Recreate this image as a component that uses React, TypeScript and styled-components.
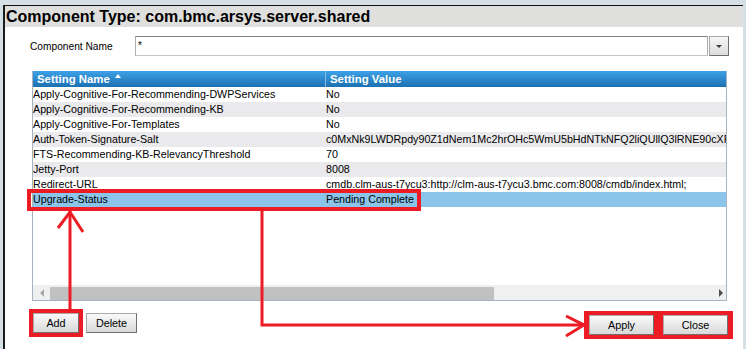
import React from 'react';
import styled, { createGlobalStyle } from 'styled-components';

const Global = createGlobalStyle`
  html, body { margin: 0; padding: 0; }
  body {
    background: #d5dfe6;
    font-family: "Liberation Sans", Arial, sans-serif;
    overflow: hidden;
  }
`;

const RED = '#ed1c24';

const Page = styled.div`
  position: relative;
  width: 746px;
  height: 349px;
  padding: 5px 3px 0 3px;
  box-sizing: border-box;
  overflow: hidden;
`;

const Frame = styled.div`
  height: 100%;
  border-top: 1px solid #111;
  border-left: 2px solid #1c1c1c;
  background: #fff;
  display: flex;
  flex-direction: column;
`;

const TitleBar = styled.div`
  height: 21px;
  line-height: 21px;
  background: #dfdfdd;
  padding-left: 1px;
  font-size: 16px;
  font-weight: bold;
  color: #000;
  white-space: nowrap;
`;

const Body = styled.div`
  flex: 1;
  display: flex;
  flex-direction: column;
  padding-top: 9px;
`;

const FormRow = styled.div`
  display: flex;
  align-items: center;
  height: 20px;
  padding-left: 25px;
`;

const Label = styled.div`
  width: 105px;
  font-size: 10.2px;
  color: #000;
`;

const Input = styled.div`
  width: 573px;
  height: 20px;
  box-sizing: border-box;
  border: 1px solid #a9aeb2;
  border-top-color: #7d8186;
  border-bottom-color: #c3c8cc;
  font-size: 10px;
  line-height: 17px;
  padding-left: 2px;
`;

const DropButton = styled.div`
  width: 20px;
  height: 20px;
  margin-left: 1px;
  box-sizing: border-box;
  border: 1px solid #a8a8a8;
  border-right-color: #6f6f6f;
  border-bottom-color: #6f6f6f;
  background: linear-gradient(#f7f7f7, #dcdcdc);
  display: flex;
  align-items: center;
  justify-content: center;
  &::after {
    content: '';
    border-left: 3px solid transparent;
    border-right: 3px solid transparent;
    border-top: 3px solid #3c3c3c;
  }
`;

const Table = styled.div`
  margin: 15px 0 0 27px;
  width: 695px;
  height: 230px;
  box-sizing: border-box;
  border: 1px solid #a7b3be;
  border-top: none;
  display: flex;
  flex-direction: column;
  overflow: hidden;
`;

const HeaderRow = styled.div`
  display: grid;
  grid-template-columns: 293px 1fr;
  height: 16px;
  background: linear-gradient(#3ea1e6, #1b71b2);
  color: #fff;
  font-size: 11.4px;
  font-weight: bold;
  line-height: 16px;
`;

const HeaderCell = styled.div<{ $divider?: boolean }>`
  padding-left: 4px;
  border-right: ${p => (p.$divider ? '1px solid #86bde6' : 'none')};
  display: flex;
  align-items: flex-start;
  white-space: nowrap;
`;

const SortArrow = styled.span`
  display: inline-block;
  margin: 3px 0 0 5px;
  border-left: 3px solid transparent;
  border-right: 3px solid transparent;
  border-bottom: 4px solid #fff;
`;

const Row = styled.div<{ $bg: string }>`
  display: grid;
  grid-template-columns: 293px 1fr;
  height: 15px;
  line-height: 15px;
  background: ${p => p.$bg};
  font-size: 10.7px;
  color: #000;
`;

const Cell = styled.div`
  white-space: nowrap;
  overflow: hidden;
`;

const Spacer = styled.div`
  flex: 1;
`;

const HScroll = styled.div`
  height: 15px;
  display: flex;
  background: #f0f0f0;
`;

const ScrollBtn = styled.div<{ $w: number; $dir: 'left' | 'right' }>`
  width: ${p => p.$w}px;
  display: flex;
  align-items: center;
  justify-content: center;
  &::after {
    content: '';
    border-top: 4px solid transparent;
    border-bottom: 4px solid transparent;
    ${p =>
      p.$dir === 'left'
        ? 'border-right: 4px solid #a9a9a9;'
        : 'border-left: 4px solid #4d4d4d; margin-left: 4px;'}
  }
`;

const Thumb = styled.div`
  width: 444px;
  margin-top: 2px;
  background: #c1c1c1;
`;

const Track = styled.div`
  flex: 1;
`;

const ButtonRow = styled.div`
  display: flex;
  justify-content: space-between;
  align-items: flex-start;
  margin-top: 8px;
  padding: 0 10px 0 24px;
`;

const Group = styled.div<{ $offset?: number }>`
  display: flex;
  align-items: center;
  gap: 3px;
  margin-top: ${p => p.$offset ?? 0}px;
`;

const RedOutline = styled.div`
  border: 4px solid ${RED};
  display: flex;
`;

const RedPanel = styled.div`
  background: ${RED};
  padding: 4px 5px;
  display: flex;
  gap: 9px;
`;

const Button = styled.button<{ $w: number }>`
  width: ${p => p.$w}px;
  height: 20px;
  padding: 0;
  box-sizing: border-box;
  border: 1px solid #a9a9a9;
  border-right-color: #707070;
  border-bottom-color: #707070;
  background: linear-gradient(#fafafa, #d9d9d9);
  font-family: "Liberation Sans", Arial, sans-serif;
  font-size: 10.8px;
  color: #000;
  line-height: 18px;
`;

const Overlay = styled.svg`
  position: absolute;
  left: 0;
  top: 0;
  pointer-events: none;
`;

const rows: [string, string][] = [
  ['Apply-Cognitive-For-Recommending-DWPServices', 'No'],
  ['Apply-Cognitive-For-Recommending-KB', 'No'],
  ['Apply-Cognitive-For-Templates', 'No'],
  ['Auth-Token-Signature-Salt', 'c0MxNk9LWDRpdy90Z1dNem1Mc2hrOHc5WmU5bHdNTkNFQ2liQUllQ3lRNE90cXFm'],
  ['FTS-Recommending-KB-RelevancyThreshold', '70'],
  ['Jetty-Port', '8008'],
  ['Redirect-URL', 'cmdb.clm-aus-t7ycu3:http://clm-aus-t7ycu3.bmc.com:8008/cmdb/index.html;'],
  ['Upgrade-Status', 'Pending Complete'],
];

export default function App() {
  return (
    <>
      <Global />
      <Page>
        <Frame>
          <TitleBar>Component Type: com.bmc.arsys.server.shared</TitleBar>
          <Body>
            <FormRow>
              <Label>Component Name</Label>
              <Input>*</Input>
              <DropButton />
            </FormRow>
            <Table>
              <HeaderRow>
                <HeaderCell $divider>
                  Setting Name
                  <SortArrow />
                </HeaderCell>
                <HeaderCell>Setting Value</HeaderCell>
              </HeaderRow>
              {rows.map(([name, value], i) => (
                <Row
                  key={name}
                  $bg={i === rows.length - 1 ? '#8bc5ea' : i % 2 === 1 ? '#eae9ec' : '#ffffff'}
                >
                  <Cell>{name}</Cell>
                  <Cell>{value}</Cell>
                </Row>
              ))}
              <Spacer />
              <HScroll>
                <ScrollBtn $w={17} $dir="left" />
                <Thumb />
                <Track />
                <ScrollBtn $w={15} $dir="right" />
              </HScroll>
            </Table>
            <ButtonRow>
              <Group>
                <RedOutline>
                  <Button $w={46}>Add</Button>
                </RedOutline>
                <Button $w={51}>Delete</Button>
              </Group>
              <Group $offset={2}>
                <RedPanel>
                  <Button $w={65}>Apply</Button>
                  <Button $w={65}>Close</Button>
                </RedPanel>
              </Group>
            </ButtonRow>
          </Body>
        </Frame>
        <Overlay width={746} height={349} viewBox="0 0 746 349">
          <rect x={29} y={191} width={390} height={18} fill="none" stroke={RED} strokeWidth={4} />
          <line x1={70} y1={211} x2={70} y2={309} stroke={RED} strokeWidth={3} />
          <polyline points="58,228 70,212 83,232" fill="none" stroke={RED} strokeWidth={3} />
          <polyline points="262,211 262,325 584,325" fill="none" stroke={RED} strokeWidth={3} />
          <polyline points="566,316 584,325 566,336" fill="none" stroke={RED} strokeWidth={3} />
        </Overlay>
      </Page>
    </>
  );
}
